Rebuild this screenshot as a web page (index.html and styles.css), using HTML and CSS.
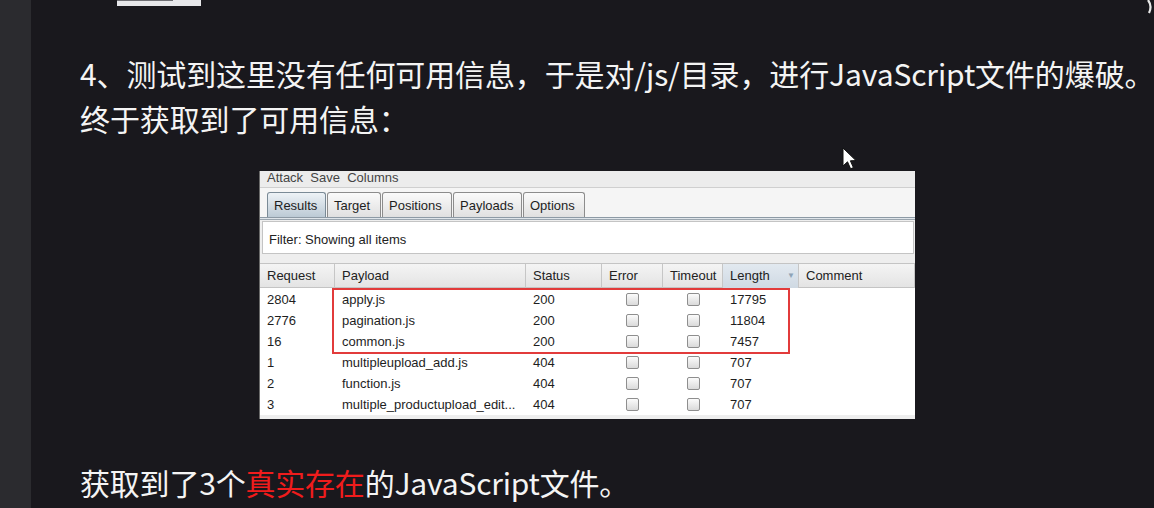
FILE: index.html
```html
<!DOCTYPE html>
<html lang="zh-CN">
<head>
<meta charset="utf-8">
<title>JavaScript 文件爆破</title>
<link rel="stylesheet" href="styles.css">
</head>
<body>
<div class="screen">
  <div class="sidebar"></div>
  <div class="slide">
    <div class="top-frag"><div class="top-frag-line"></div></div>
    <svg class="corner-mark" width="10" height="16" viewBox="0 0 10 16"><path d="M4 0 C7 4 7 9 5 13" stroke="#e8e8e8" stroke-width="2.2" fill="none"/></svg>

    <p class="para">4、测试到这里没有任何可用信息，于是对/js/目录，进行JavaScript文件的爆破。<br>终于获取到了可用信息：</p>

    <div class="panel">
      <div class="menubar"><span>Attack&nbsp; Save&nbsp; Columns</span></div>
      <div class="tabstrip">
        <div class="tab active">Results</div>
        <div class="tab">Target</div>
        <div class="tab">Positions</div>
        <div class="tab">Payloads</div>
        <div class="tab">Options</div>
      </div>
      <div class="tabline"></div>
      <div class="content">
        <div class="filter">Filter: Showing all items</div>
        <div class="table">
          <div class="thead">
            <div class="th">Request</div>
            <div class="th">Payload</div>
            <div class="th">Status</div>
            <div class="th">Error</div>
            <div class="th">Timeout</div>
            <div class="th sorted">Length<span class="sort">▼</span></div>
            <div class="th">Comment</div>
          </div>
          <div class="tbody">
            <div class="tr"><div class="td">2804</div><div class="td">apply.js</div><div class="td">200</div><div class="td c"><span class="cb"></span></div><div class="td c"><span class="cb"></span></div><div class="td">17795</div><div class="td"></div></div>
            <div class="tr"><div class="td">2776</div><div class="td">pagination.js</div><div class="td">200</div><div class="td c"><span class="cb"></span></div><div class="td c"><span class="cb"></span></div><div class="td">11804</div><div class="td"></div></div>
            <div class="tr"><div class="td">16</div><div class="td">common.js</div><div class="td">200</div><div class="td c"><span class="cb"></span></div><div class="td c"><span class="cb"></span></div><div class="td">7457</div><div class="td"></div></div>
            <div class="tr"><div class="td">1</div><div class="td">multipleupload_add.js</div><div class="td">404</div><div class="td c"><span class="cb"></span></div><div class="td c"><span class="cb"></span></div><div class="td">707</div><div class="td"></div></div>
            <div class="tr"><div class="td">2</div><div class="td">function.js</div><div class="td">404</div><div class="td c"><span class="cb"></span></div><div class="td c"><span class="cb"></span></div><div class="td">707</div><div class="td"></div></div>
            <div class="tr"><div class="td">3</div><div class="td">multiple_productupload_edit...</div><div class="td">404</div><div class="td c"><span class="cb"></span></div><div class="td c"><span class="cb"></span></div><div class="td">707</div><div class="td"></div></div>
            <div class="highlight"></div>
          </div>
        </div>
      </div>
    </div>

    <p class="para bottom">获取到了3个<span class="red">真实存在</span>的JavaScript文件。</p>

    <svg class="cursor" width="16" height="24" viewBox="0 0 16 24"><path d="M1 1 L1 19 L5.5 14.8 L8.6 21.8 L11.4 20.6 L8.4 13.8 L14 13.6 Z" fill="#ffffff" stroke="#111" stroke-width="1"/></svg>
  </div>
</div>
</body>
</html>
```

FILE: styles.css
```css
* { box-sizing: border-box; }
html, body { margin: 0; padding: 0; }
body {
  width: 1154px;
  height: 508px;
  overflow: hidden;
  background: #19181d;
}
.screen {
  display: flex;
  height: 508px;
}
.sidebar {
  width: 31px;
  flex: none;
  background: #2b2b2f;
}
.slide {
  flex: 1;
  min-width: 0;
  position: relative;
  padding-left: 49px;
  background: #19181d;
}
.top-frag {
  margin-left: 37px;
  width: 84px;
  height: 6px;
  background: #e7e7ea;
}
.top-frag-line {
  width: 56px;
  height: 1px;
  background: #6f6f74;
}
.corner-mark {
  position: absolute;
  top: 0;
  right: 0;
}
.para {
  margin: 45px 0 0 0;
  font-family: "Noto Sans CJK SC", "Microsoft YaHei", sans-serif;
  font-size: 30px;
  line-height: 45px;
  color: #f4f4f4;
  white-space: nowrap;
  letter-spacing: -0.12px;
}
.para.bottom {
  margin-top: 41px;
  letter-spacing: -0.2px;
}
.red { color: #f01c1c; }

/* Burp panel */
.panel {
  margin-top: 30px;
  margin-left: 179px;
  width: 656px;
  height: 248px;
  background: #eeeeee;
  border-left: 1px solid #6a6a6a;
  overflow: hidden;
  font-family: "Liberation Sans", Arial, sans-serif;
  font-size: 13px;
  color: #1e1e1e;
}
.menubar {
  height: 17px;
  overflow: hidden;
  padding-left: 7px;
  border-bottom: 1px solid #cfcfcf;
  background: #ececec;
  color: #444;
}
.menubar span {
  display: block;
  line-height: 17px;
  margin-top: -2px;
}
.tabstrip {
  display: flex;
  gap: 1px;
  height: 29px;
  padding: 4px 0 0 7px;
  background: #f5f5f5;
}
.tab {
  height: 25px;
  line-height: 25px;
  padding: 0 6px;
  border: 1px solid #8c8c8c;
  border-bottom: none;
  border-radius: 3px 3px 0 0;
  background: linear-gradient(#fafafa, #e0e0e0);
  color: #1e1e1e;
}
.tab:nth-child(1) { width: 59px; }
.tab:nth-child(2) { width: 54px; }
.tab:nth-child(3) { width: 70px; }
.tab:nth-child(4) { width: 69px; }
.tab:nth-child(5) { width: 62px; }
.tab.active {
  background: linear-gradient(#edf2f6, #bccad5);
  border-color: #7a8a96;
}
.tabline {
  height: 3px;
  border-top: 1px solid #8d9aa5;
  border-bottom: 1px solid #9aa5ae;
  background: #dfe5ea;
}
.content {
  padding-top: 1px;
  background: #eeeeee;
}
.filter {
  margin: 0 1px 0 2px;
  height: 33px;
  line-height: 35px;
  padding-left: 6px;
  background: #ffffff;
  border: 1px solid #c4c4c4;
  color: #222;
}
.table {
  margin-top: 9px;
}
.thead {
  display: grid;
  grid-template-columns: 75px 191px 76px 61px 60px 76px 1fr;
  height: 25px;
  border-top: 1px solid #c4c4c4;
  border-bottom: 1px solid #c4c4c4;
  background: linear-gradient(#f4f4f4, #e4e4e4);
}
.th {
  line-height: 24px;
  padding-left: 7px;
  border-right: 1px solid #c6c6c6;
  color: #222;
}
.th.sorted {
  position: relative;
  background: linear-gradient(#e2e9f0, #cfd9e3);
}
.sort {
  position: absolute;
  right: 3px;
  top: 0;
  font-size: 8px;
  color: #8ea3b6;
}
.tbody {
  position: relative;
  padding-top: 1px;
  background: #ffffff;
}
.tr {
  display: grid;
  grid-template-columns: 75px 191px 76px 61px 60px 76px 1fr;
  height: 21px;
}
.td {
  line-height: 22px;
  padding-left: 7px;
  white-space: nowrap;
  overflow: hidden;
  color: #1e1e1e;
}
.td.c {
  display: flex;
  align-items: center;
  justify-content: center;
  padding-left: 0;
}
.cb {
  width: 13px;
  height: 13px;
  border: 1px solid #8e8e8e;
  border-radius: 2px;
  background: linear-gradient(#fbfbfb, #dadada);
}
.highlight {
  position: absolute;
  left: 72px;
  top: 0;
  width: 458px;
  height: 66px;
  border: 2px solid #e23b3b;
}
.cursor {
  position: absolute;
  left: 811px;
  top: 147px;
}
```
